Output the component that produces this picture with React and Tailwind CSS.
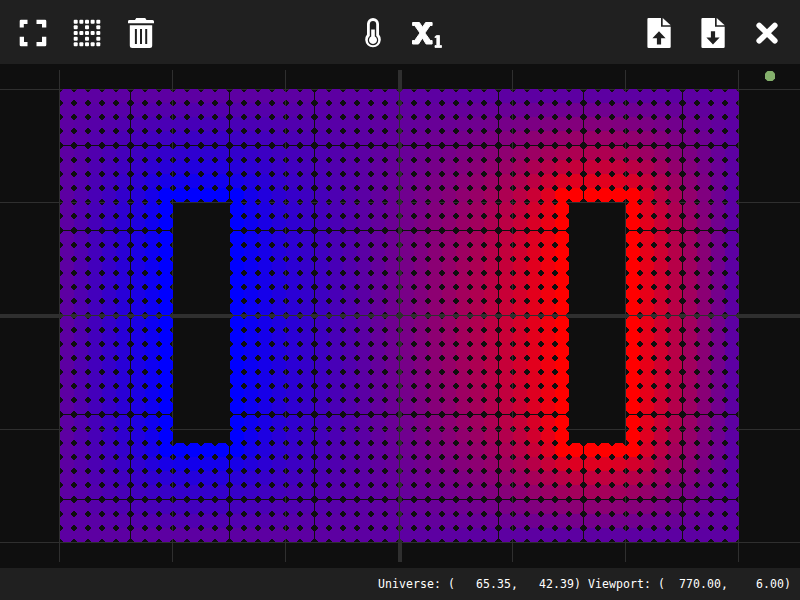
import React from "react";

// Left/top pixel of every lattice cell; one extra pixel falls between some neighbours.
const starts = (origin, runs) => {
  const out = [];
  let p = origin;
  runs.forEach((n) => {
    for (let i = 0; i < n; i++) {
      out.push(p);
      p += 14;
    }
    p += 1;
  });
  return out;
};
const XS = starts(60, [5, 7, 6, 6, 7, 6, 7, 4]);
const YS = starts(25, [4, 6, 6, 7, 6, 3]);
const AMBIENT = 0.365;

const inBox = (c, r, c0, c1, r0, r1) => c >= c0 && c <= c1 && r >= r0 && r <= r1;
const isHole = (c, r) => inBox(c, r, 8, 11, 8, 24) || inBox(c, r, 36, 39, 8, 24);

// Steady temperature field between a cold block, a hot block and ambient walls.
function solve() {
  const t = YS.map(() => XS.map(() => AMBIENT));
  const fixed = YS.map((_, r) =>
    XS.map((_, c) => {
      if (inBox(c, r, 7, 12, 7, 25)) { t[r][c] = 0; return true; }
      if (inBox(c, r, 35, 40, 7, 25)) { t[r][c] = 1; return true; }
      return r === 0 || c === 0 || r === 31 || c === 47;
    })
  );
  for (let n = 0; n < 500; n++)
    for (let r = 1; r < 31; r++)
      for (let c = 1; c < 47; c++)
        if (!fixed[r][c]) {
          const avg = (t[r - 1][c] + t[r + 1][c] + t[r][c - 1] + t[r][c + 1]) / 4;
          t[r][c] += 1.7 * (avg - t[r][c]);
        }
  return t;
}
const FIELD = solve();

const CELL = "h8v1h1v1h1v1h1v8h-1v1h-1v1h-1v1h-8v-1h-1v-1h-1v-1h-1v-8h1v-1h1v-1h1z";

function Lattice() {
  return (
    <svg width="800" height="504" viewBox="0 0 800 504" shapeRendering="crispEdges" className="block">
      <g fill="#2f2f2f">
        {[59, 172, 285, 512, 625, 738].map((x) => <rect key={x} x={x} y="6" width="1" height="492" />)}
        {[25, 138, 365, 478].map((y) => <rect key={y} x="0" y={y} width="800" height="1" />)}
        <rect x="398" y="6" width="4" height="492" />
        <rect x="0" y="250" width="800" height="4" />
      </g>
      {YS.map((y, r) =>
        XS.map((x, c) => {
          if (isHole(c, r)) return null;
          const v = Math.round(FIELD[r][c] * 255);
          return <path key={`${r}-${c}`} d={`M${x + 3} ${y}${CELL}`} fill={`rgb(${v},0,${255 - v})`} />;
        })
      )}
      <path d="M767.500 7h5l2.500 2.500v5l-2.500 2.500h-5l-2.500-2.500v-5z" fill="#84b06c" shapeRendering="auto" />
    </svg>
  );
}

const Icon = ({ children }) => (
  <svg width="30" height="30" viewBox="0 0 30 30" fill="white" className="block">{children}</svg>
);

const Expand = () => (
  <Icon><path d="M3 1.7h6.500v4.300H5.800v3.500H1.700V3q0-1.300 1.300-1.300zM18.500 1.700H27q1.300 0 1.300 1.300v6.500H24V6h-5.500zM1.700 18.700H6V24h3.500v4.200H3q-1.300 0-1.300-1.300zM24 18.700h4.300V27q0 1.200-1.300 1.200h-8.500V24H24z" /></Icon>
);
const STEPS = [0, 1, 2, 3, 4];
const Dots = () => (
  <Icon>
    {STEPS.map((r) => STEPS.map((c) =>
      r % 2 === 0 || c % 2 === 0 ? (
        <rect key={`${r}${c}`} x={1.7 + c * 5.65} y={1.7 + r * 5.65} width="4" height="4" rx="1" />
      ) : null
    ))}
  </Icon>
);
const Trash = () => (
  <Icon>
    <path d="M3 2h6l1.200-2h9L20.500 2h6q1.500 0 1.500 1.500v1.800H2V3.500Q2 2 3 2z" />
    <path fillRule="evenodd" d="M3.800 7.200h22.400v20.300Q26.200 30 23.700 30H6.300Q3.800 30 3.800 27.500zM8.900 11v15h2V11zM14 11v15h2V11zM19.200 11v15h2V11z" />
  </Icon>
);
const Thermometer = () => (
  <Icon>
    <path fillRule="evenodd" d="M15 0a6 6 0 0 1 6 6v10.500a7.800 7.800 0 1 1-12 0V6a6 6 0 0 1 6-6zm0 3A3.200 3.200 0 0 0 11.800 6v12l-.8.8a5.200 5.200 0 1 0 8 0l-.8-.8V6A3.200 3.200 0 0 0 15 3z" />
    <path d="M13.200 11.500h3.600v7a4 4 0 1 1-3.600 0z" />
  </Icon>
);
const Subscript = () => (
  <Icon>
    <path strokeLinejoin="round" stroke="white" strokeWidth="1" d="M.6 4.500h6.800l3.100 4.700 3.100-4.700h6.500v3h-2l-5.200 7.500 5.400 7.500h1.800v3.500h-6L10.400 20l-3.900 6H.5v-3.500h2.200L8 15 2.700 7.500H.6z" />
    <path strokeLinejoin="round" stroke="white" strokeWidth=".8" d="M22.900 18.800l1.600-1.300h3v10h2v2h-6.500v-2h1.800v-8h-1.900z" />
  </Icon>
);
const FileArrow = ({ d }) => (
  <Icon>
    <path fillRule="evenodd" d={"M4.500 0H17v8.700h9.700v20q0 1.300-1.300 1.300H4.700q-1.300 0-1.300-1.300V1.300Q3.400 0 4.500 0z" + d} />
    <path d="M18.700 0l8 7.200h-8z" />
  </Icon>
);
const Close = () => (
  <Icon><path d="M7.200 7.400L22.800 22.800M22.800 7.400L7.200 22.800" stroke="white" strokeWidth="5.600" strokeLinecap="round" /></Icon>
);

export default function App() {
  return (
    <div className="flex h-[600px] w-[800px] flex-col overflow-hidden bg-[#0f0f0f]">
      <header className="flex h-16 items-center justify-between bg-[#202020] px-[18px] pt-[2px]">
        <div className="flex gap-6"><Expand /><Dots /><Trash /></div>
        <div className="flex gap-6"><Thermometer /><Subscript /></div>
        <div className="flex gap-6">
          <FileArrow d="M15 13.200l6.600 7h-4.500v6.300h-4.200v-6.300h-4.500z" />
          <FileArrow d="M15 26.500l6.600-7h-4.500v-6.300h-4.200v6.300h-4.500z" />
          <Close />
        </div>
      </header>
      <main className="h-[504px]"><Lattice /></main>
      <footer className="flex h-8 items-center justify-end whitespace-pre bg-[#202020] pt-[2px] pr-[9px] font-['DejaVu_Sans_Mono',monospace] text-[11.5px] tracking-[0.077px] text-white">
        {"Universe: (   65.35,   42.39) Viewport: (  770.00,    6.00)"}
      </footer>
    </div>
  );
}
